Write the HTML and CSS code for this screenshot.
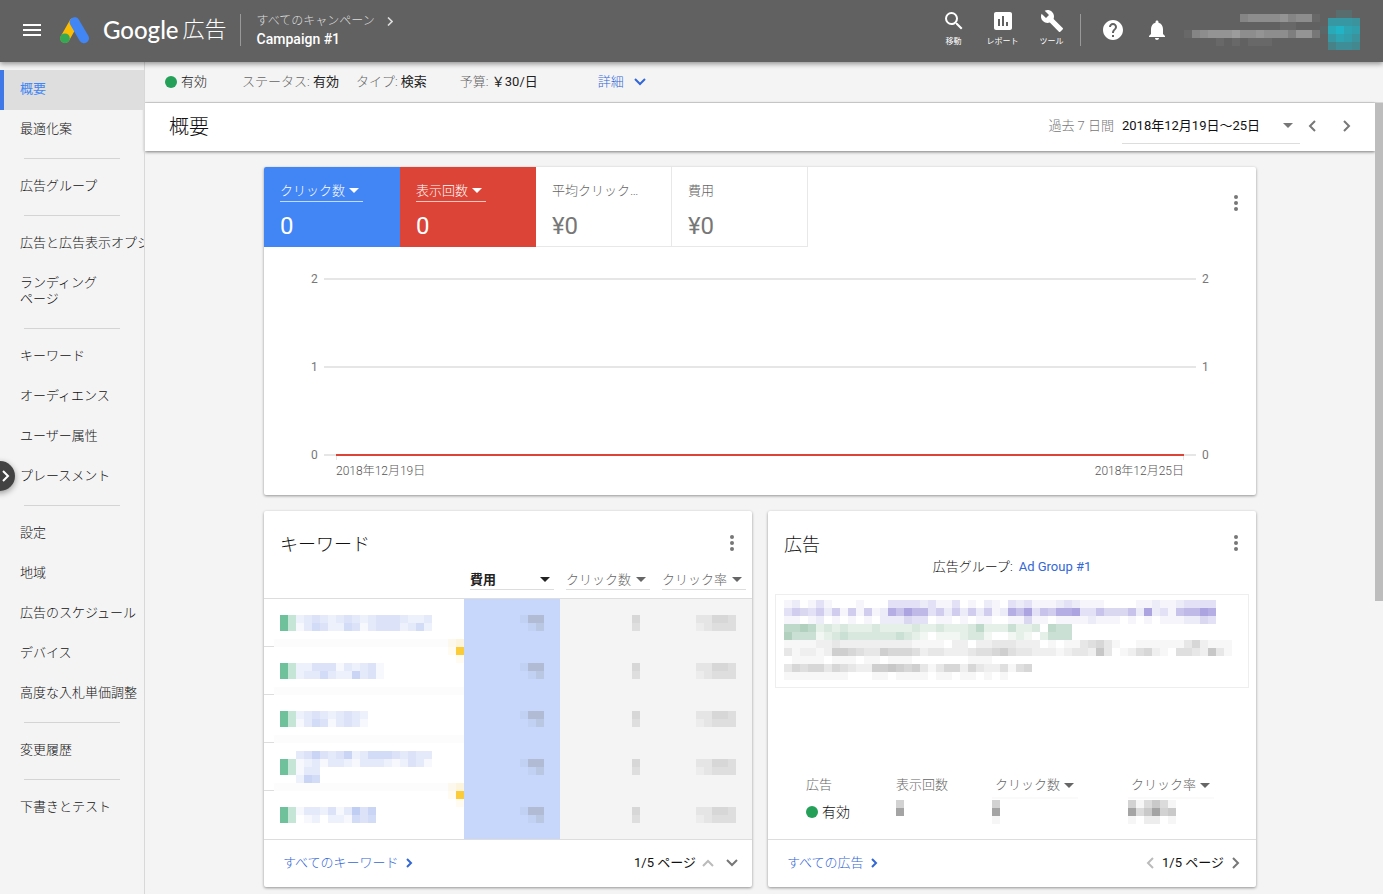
FILE: index.html
```html
<!DOCTYPE html>
<html lang="ja">
<head>
<meta charset="utf-8">
<title>Google 広告</title>
<link rel="stylesheet" href="styles.css">
</head>
<body>
<header class="topbar">
  <button class="icon-btn menu-btn" aria-label="メニュー"><svg width="18" height="12" viewBox="0 0 18 12"><path d="M0 0h18v2H0zM0 5h18v2H0zM0 10h18v2H0z" fill="currentColor"/></svg></button>
  <div class="brand">
    <svg width="30" height="27" viewBox="0 0 30 27" fill="none" stroke-linecap="round"><path d="M5 21.200 13.800 5.700" stroke="#fbbc04" stroke-width="9.400"/><path d="M14.600 5.200 24 21.200" stroke="#4285f4" stroke-width="10"/><circle cx="4.900" cy="21.300" r="4.900" fill="#34a853"/></svg>
    <span class="brand-google">Google</span><span class="brand-ads">広告</span>
  </div>
  <div class="crumbs">
    <a class="crumb-parent" href="#">すべてのキャンペーン<svg width="6" height="9" viewBox="0 0 6 9"><path d="M1 .5l4 4-4 4" fill="none" stroke="currentColor" stroke-width="1.600"/></svg></a>
    <strong>Campaign #1</strong>
  </div>
  <div class="tools">
    <button class="tool"><svg width="24" height="24" viewBox="0 0 24 24"><path fill="currentColor" d="M15.500 14h-.79l-.28-.27A6.470 6.470 0 0 0 16 9.500 6.500 6.500 0 1 0 9.500 16c1.610 0 3.090-.59 4.230-1.570l.27.28v.79l5 4.990L20.490 19l-4.990-5zm-6 0C7.010 14 5 11.990 5 9.500S7.010 5 9.500 5 14 7.010 14 9.500 11.990 14 9.500 14z"/></svg>移動</button>
    <button class="tool"><svg width="24" height="24" viewBox="0 0 24 24"><path fill="currentColor" d="M19 3H5c-1.100 0-2 .9-2 2v14c0 1.100.9 2 2 2h14c1.100 0 2-.9 2-2V5c0-1.100-.9-2-2-2zM9 17H7v-7h2v7zm4 0h-2V7h2v10zm4 0h-2v-4h2v4z"/></svg>レポート</button>
    <button class="tool"><svg width="24" height="24" viewBox="0 0 24 24"><path fill="currentColor" d="M22.700 19l-9.100-9.100c.9-2.300.4-5-1.500-6.900-2-2-5-2.400-7.400-1.300L9 6 6 9 1.600 4.700C.4 7.100.9 10.100 2.900 12.100c1.900 1.900 4.600 2.400 6.900 1.500l9.100 9.100c.4.4 1 .4 1.400 0l2.300-2.300c.5-.4.5-1.100.1-1.400z"/></svg>ツール</button>
  </div>
  <div class="account">
    <button class="icon-btn" aria-label="ヘルプ"><svg width="24" height="24" viewBox="0 0 24 24"><path fill="currentColor" d="M12 2C6.480 2 2 6.480 2 12s4.480 10 10 10 10-4.480 10-10S17.520 2 12 2zm1 17h-2v-2h2v2zm2.070-7.750l-.9.920C13.450 12.900 13 13.500 13 15h-2v-.5c0-1.100.45-2.100 1.170-2.830l1.240-1.260c.37-.36.59-.86.59-1.410 0-1.100-.9-2-2-2s-2 .9-2 2H8c0-2.210 1.790-4 4-4s4 1.790 4 4c0 .88-.36 1.680-.93 2.250z"/></svg></button>
    <button class="icon-btn" aria-label="通知"><svg width="24" height="24" viewBox="0 0 24 24"><path fill="currentColor" d="M12 22c1.100 0 2-.9 2-2h-4c0 1.100.89 2 2 2zm6-6v-5c0-3.070-1.640-5.640-4.500-6.320V4c0-.83-.67-1.500-1.500-1.500s-1.500.67-1.500 1.500v.68C7.630 5.360 6 7.920 6 11v5l-2 2v1h16v-1l-2-2z"/></svg></button>
    <div class="user">
      <svg class="mosaic" data-color="#d0d0d0" data-rows="00000005666675661 00000000000011000 15677786676664773 00001010111000000"></svg>
      <svg class="mosaic" data-color="#22b4c6" data-rows="00220 0aaa9 1dfcb 0acb9 06887"></svg>
    </div>
  </div>
</header>
<div class="shell">
  <nav class="sidebar">
    <ul>
      <li><a class="active" href="#">概要</a></li>
      <li><a href="#">最適化案</a></li>
      <li class="rule"></li>
      <li><a href="#">広告グループ</a></li>
      <li class="rule"></li>
      <li><a href="#">広告と広告表示オプション</a></li>
      <li><a href="#">ランディング<br>ページ</a></li>
      <li class="rule"></li>
      <li><a href="#">キーワード</a></li>
      <li><a href="#">オーディエンス</a></li>
      <li><a href="#">ユーザー属性</a></li>
      <li><a href="#">プレースメント</a></li>
      <li class="rule"></li>
      <li><a href="#">設定</a></li>
      <li><a href="#">地域</a></li>
      <li><a href="#">広告のスケジュール</a></li>
      <li><a href="#">デバイス</a></li>
      <li><a href="#">高度な入札単価調整</a></li>
      <li class="rule"></li>
      <li><a href="#">変更履歴</a></li>
      <li class="rule"></li>
      <li><a href="#">下書きとテスト</a></li>
    </ul>
    <button class="expander" aria-label="ナビゲーションを開く"><svg width="8" height="12" viewBox="0 0 8 12"><path d="M1 1l5 5-5 5" fill="none" stroke="currentColor" stroke-width="2"/></svg></button>
  </nav>
  <main class="main">
    <div class="statusbar">
      <span class="state"><i class="dot"></i>有効</span>
      <span class="fact">ステータス: <b>有効</b></span>
      <span class="fact">タイプ: <b>検索</b></span>
      <span class="fact budget">予算: <b>￥30/日</b></span>
      <button class="details">詳細<svg width="12" height="8" viewBox="0 0 12 8"><path d="M1 1l5 5 5-5" fill="none" stroke="currentColor" stroke-width="2"/></svg></button>
    </div>
    <div class="body-row">
      <div class="content">
        <div class="titlebar">
          <h1>概要</h1>
          <div class="period">
            <span class="period-name">過去 7 日間</span>
            <button class="period-range">2018年12月19日～25日<i class="caret"></i></button>
            <button class="step" aria-label="前の期間"><svg width="8" height="12" viewBox="0 0 8 12"><path d="M7 1L2 6l5 5" fill="none" stroke="currentColor" stroke-width="2"/></svg></button>
            <button class="step" aria-label="次の期間"><svg width="8" height="12" viewBox="0 0 8 12"><path d="M1 1l5 5-5 5" fill="none" stroke="currentColor" stroke-width="2"/></svg></button>
          </div>
        </div>
        <div class="cards">
          <section class="card overview">
            <button class="more" aria-label="その他"><svg width="24" height="24" viewBox="0 0 24 24" fill="currentColor"><circle cx="12" cy="6" r="2"/><circle cx="12" cy="12" r="2"/><circle cx="12" cy="18" r="2"/></svg></button>
            <div class="metrics">
              <div class="metric blue"><button>クリック数<i class="caret"></i></button><p>0</p></div>
              <div class="metric red"><button>表示回数<i class="caret"></i></button><p>0</p></div>
              <div class="metric"><span>平均クリック…</span><p>¥0</p></div>
              <div class="metric"><span>費用</span><p>¥0</p></div>
            </div>
            <div class="chart">
              <div class="tick"><span>2</span><i class="grid-line"></i><span>2</span></div>
              <div class="tick"><span>1</span><i class="grid-line"></i><span>1</span></div>
              <div class="tick"><span>0</span><i class="grid-line"><i class="series"></i></i><span>0</span></div>
              <div class="dates"><span>2018年12月19日</span><span>2018年12月25日</span></div>
            </div>
          </section>
          <section class="card keywords">
            <button class="more" aria-label="その他"><svg width="24" height="24" viewBox="0 0 24 24" fill="currentColor"><circle cx="12" cy="6" r="2"/><circle cx="12" cy="12" r="2"/><circle cx="12" cy="18" r="2"/></svg></button>
            <h2>キーワード</h2>
            <table>
              <thead>
                <tr><th class="name"></th><th><button class="sorted">費用<i class="caret"></i></button></th><th><button>クリック数<i class="caret"></i></button></th><th><button>クリック率<i class="caret"></i></button></th></tr>
              </thead>
              <tbody>
                <tr><td class="name"><div><svg class="mosaic" data-color="#26a269" data-rows="a4 a4"></svg><svg class="mosaic" data-color="#7a96e8" data-rows="23432343234443223 13542254134442352"></svg></div></td>
                <td class="cost"><svg class="mosaic" data-color="#888888" data-rows="155 013"></svg></td><td><svg class="mosaic clicks" data-color="#888888" data-rows="4 3"></svg></td><td><svg class="mosaic" data-color="#888888" data-rows="22443 12333"></svg></td></tr>
                <tr><td class="name"><div><svg class="mosaic" data-color="#26a269" data-rows="a4 a4"></svg><svg class="mosaic" data-color="#7a96e8" data-rows="22444132341 23353226341"></svg></div><svg class="mosaic flag" data-color="#fcc419" data-rows="12 1d 01"></svg></td>
                <td class="cost"><svg class="mosaic" data-color="#888888" data-rows="155 013"></svg></td><td><svg class="mosaic clicks" data-color="#888888" data-rows="4 3"></svg></td><td><svg class="mosaic" data-color="#888888" data-rows="22443 12333"></svg></td></tr>
                <tr><td class="name"><div><svg class="mosaic" data-color="#26a269" data-rows="a4 a4"></svg><svg class="mosaic" data-color="#7a96e8" data-rows="234323432 135413431"></svg></div></td>
                <td class="cost"><svg class="mosaic" data-color="#888888" data-rows="155 013"></svg></td><td><svg class="mosaic clicks" data-color="#888888" data-rows="4 3"></svg></td><td><svg class="mosaic" data-color="#888888" data-rows="22443 12333"></svg></td></tr>
                <tr><td class="name"><div><svg class="mosaic" data-color="#26a269" data-rows="a4 a4"></svg><svg class="mosaic" data-color="#7a96e8" data-rows="34643462355543433 12313321333212431 13300000000000000 26500000000000000"></svg></div></td>
                <td class="cost"><svg class="mosaic" data-color="#888888" data-rows="155 013"></svg></td><td><svg class="mosaic clicks" data-color="#888888" data-rows="4 3"></svg></td><td><svg class="mosaic" data-color="#888888" data-rows="22443 12333"></svg></td></tr>
                <tr><td class="name"><div><svg class="mosaic" data-color="#26a269" data-rows="a4 a4"></svg><svg class="mosaic" data-color="#7a96e8" data-rows="1332413746 0120221545"></svg></div><svg class="mosaic flag" data-color="#fcc419" data-rows="12 1d 01"></svg></td>
                <td class="cost"><svg class="mosaic" data-color="#888888" data-rows="155 013"></svg></td><td><svg class="mosaic clicks" data-color="#888888" data-rows="4 3"></svg></td><td><svg class="mosaic" data-color="#888888" data-rows="22443 12333"></svg></td></tr>
              </tbody>
            </table>
            <footer>
              <a href="#">すべてのキーワード<svg width="7" height="10" viewBox="0 0 7 10"><path d="M1 1l4 4-4 4" fill="none" stroke="currentColor" stroke-width="2"/></svg></a>
              <div class="pager"><span>1/5 ページ</span>
                <button class="off" aria-label="前のページ"><svg width="12" height="8" viewBox="0 0 12 8"><path d="M1 7l5-5 5 5" fill="none" stroke="currentColor" stroke-width="2"/></svg></button>
                <button aria-label="次のページ"><svg width="12" height="8" viewBox="0 0 12 8"><path d="M1 1l5 5 5-5" fill="none" stroke="currentColor" stroke-width="2"/></svg></button></div>
            </footer>
          </section>
          <section class="card ads">
            <button class="more" aria-label="その他"><svg width="24" height="24" viewBox="0 0 24 24" fill="currentColor"><circle cx="12" cy="6" r="2"/><circle cx="12" cy="12" r="2"/><circle cx="12" cy="18" r="2"/></svg></button>
            <h2>広告</h2>
            <p class="group">広告グループ:<a href="#">Ad Group #1</a></p>
            <div class="preview">
              <svg class="mosaic" data-color="#7468cc" data-rows="120131000100033332311301021032311123211100001121123333 354352515151286977352525251286936588933644462923167798 110120101010222433011010110011411011112111010101112243"></svg>
              <svg class="mosaic" data-color="#3c8c5c" data-rows="556523232223222232232223522242230544 644412343333334321011123310012102444"></svg>
              <svg class="mosaic" data-color="#888888" data-rows="11112232222222221111022022333222010113453100111111352111 31221266543365554233222344564332221233273012452104432731 01111011101101110000000111000000000000000000000000000000 35455354322667656313552532241450000000000000000000000000 11111111000110111101101101010000000000000000000000000000"></svg>
            </div>
            <table class="adstats">
              <thead><tr><th>広告</th><th>表示回数</th><th><button>クリック数<i class="caret"></i></button></th><th><button>クリック率<i class="caret"></i></button></th></tr></thead>
              <tbody><tr><td><span class="state"><i class="dot"></i>有効</span></td><td><svg class="mosaic" data-color="#777777" data-rows="5 a 0"></svg></td><td><svg class="mosaic" data-color="#777777" data-rows="5 a 1"></svg></td><td><svg class="mosaic" data-color="#777777" data-rows="514641 a46a56 102201"></svg></td></tr></tbody>
            </table>
            <footer>
              <a href="#">すべての広告<svg width="7" height="10" viewBox="0 0 7 10"><path d="M1 1l4 4-4 4" fill="none" stroke="currentColor" stroke-width="2"/></svg></a>
              <div class="pager"><button class="off" aria-label="前のページ"><svg width="8" height="12" viewBox="0 0 8 12"><path d="M7 1L2 6l5 5" fill="none" stroke="currentColor" stroke-width="2"/></svg></button>
                <span>1/5 ページ</span>
                <button aria-label="次のページ"><svg width="8" height="12" viewBox="0 0 8 12"><path d="M1 1l5 5-5 5" fill="none" stroke="currentColor" stroke-width="2"/></svg></button></div>
            </footer>
          </section>
        </div>
      </div>
      <div class="scroll"><div class="thumb"></div></div>
    </div>
  </main>
</div>
<script src="mosaic.js"></script>
</body>
</html>
```

FILE: styles.css
```css
* { box-sizing: border-box; }
body, h1, h2, p, ul { margin: 0; padding: 0; }
body {
  display: flex;
  flex-direction: column;
  min-height: 100vh;
  background: #f4f4f4;
  color: #111;
  font: 13px/16px Roboto, "Noto Sans CJK JP", sans-serif;
  font-weight: 300;
}
button { border: 0; padding: 0; background: none; color: inherit; font: inherit; cursor: pointer; }
a { color: inherit; text-decoration: none; }
i { font-style: normal; }
svg { display: block; flex: none; }
.caret {
  flex: none;
  width: 10px;
  border: 5px solid transparent;
  border-top-color: currentColor;
  border-bottom: 0;
}

/* Top bar */
.topbar {
  position: relative;
  z-index: 2;
  display: flex;
  align-items: center;
  height: 62px;
  padding: 0 23px 2px;
  background: #616161;
  color: #fff;
  box-shadow: 0 2px 5px rgba(0, 0, 0, .4);
}
.brand { display: flex; align-items: center; margin-left: 19px; }
.brand-google { margin-left: 13px; font: 500 24px/32px Lato, sans-serif; }
.brand-ads { margin-left: 4px; font-size: 22px; line-height: 32px; }
.crumbs {
  display: flex;
  flex-direction: column;
  justify-content: center;
  height: 32px;
  margin-left: 13px;
  padding-left: 16px;
  border-left: 1px solid #999;
  white-space: nowrap;
}
.crumb-parent { display: flex; align-items: center; gap: 12px; color: #ddd; font-size: 12px; line-height: 18px; }
.crumbs strong { font-size: 14px; font-weight: 500; line-height: 18px; }
.tools { display: flex; gap: 8px; margin-left: auto; padding-right: 8px; border-right: 1px solid #999; height: 32px; align-items: center; }
.tool { display: flex; flex-direction: column; align-items: center; width: 41px; font-size: 8px; font-weight: 400; line-height: 18px; white-space: nowrap; }
.account { display: flex; align-items: center; gap: 20px; margin-left: 20px; }
.user { display: flex; align-items: center; margin-left: -5px; }

/* Navigation */
.shell { display: flex; flex: 1; }
.sidebar { position: relative; flex: none; width: 145px; padding-top: 8px; border-right: 1px solid #d8d8d8; }
.sidebar ul { list-style: none; overflow: hidden; }
.sidebar a { display: block; padding: 11px 0 13px 20px; white-space: nowrap; }
.sidebar .active { padding-left: 16px; border-left: 4px solid #4078e8; background: #dedede; color: #4285f4; font-weight: 400; }
.rule { height: 1px; margin: 8px 24px; background: #d4d4d4; }
.expander {
  position: absolute;
  left: -15px;
  top: 399px;
  display: flex;
  justify-content: flex-end;
  align-items: center;
  width: 30px;
  height: 30px;
  padding-right: 5px;
  border-radius: 50%;
  background: #424242;
  color: #fff;
  box-shadow: 0 2px 6px rgba(0, 0, 0, .4);
}

/* Status line */
.main { display: flex; flex: 1; flex-direction: column; min-width: 0; }
.statusbar { display: flex; align-items: center; height: 41px; padding: 0 20px; border-bottom: 1px solid #d8d8d8; color: #666; }
.state { display: flex; align-items: center; gap: 4px; color: #111; }
.dot { width: 12px; height: 12px; border-radius: 50%; background: #24a058; }
.fact { margin-left: 17px; }
.state + .fact { margin-left: 35px; }
.fact b { color: #222; font-weight: 400; }
.fact.budget { margin-left: 33px; }
.details { display: flex; align-items: center; gap: 10px; margin-left: 60px; color: #3367d6; }

/* Page heading */
.body-row { display: flex; flex: 1; }
.content { flex: 1; min-width: 0; }
.scroll { width: 8px; }
.thumb { height: 63%; background: #bdbdbd; }
.titlebar { display: flex; align-items: center; justify-content: space-between; height: 48px; padding: 0 24px 2px; background: #fff; box-shadow: 0 1px 3px rgba(0, 0, 0, .5); }
.titlebar h1 { padding-top: 2px; color: #111; font-size: 20px; font-weight: 300; }
.period { display: flex; align-items: center; }
.period-name { margin-right: 8px; color: #777; }
.period-range { display: flex; align-items: center; justify-content: space-between; width: 178px; height: 36px; padding-right: 7px; border-bottom: 1px solid #ddd; color: #111; font-weight: 400; }
.period-range .caret { color: #777; }
.step { margin-left: 8px; color: #777; }
.step + .step { margin-left: 27px; }

/* Cards */
.cards { display: grid; grid-template-columns: 1fr 1fr; gap: 16px; max-width: 1008px; margin: 0 auto; padding: 16px 8px 7px; }
.card { position: relative; display: flex; flex-direction: column; border-radius: 2px; background: #fff; box-shadow: 0 1px 3px rgba(0, 0, 0, .4); }
.overview { grid-column: 1 / -1; }
.more { position: absolute; top: 20px; right: 8px; color: #777; }
.overview .more { top: 24px; }
.card h2 { padding: 24px 16px 0; font-size: 18px; font-weight: 300; line-height: 20px; }

/* Metric tiles */
.metrics { display: flex; }
.metric { width: 136px; height: 80px; padding: 15px 16px 0; border: solid #e8e8e8; border-width: 0 1px 1px 0; color: #666; }
.metric button { display: flex; align-items: center; gap: 4px; height: 20px; padding: 0 4px 2px 0; border-bottom: 1px solid rgba(255, 255, 255, .7); }
.metric span { display: block; height: 20px; line-height: 18px; white-space: nowrap; }
.metric p { margin-top: 8px; color: #777; font-size: 24px; font-weight: 400; line-height: 32px; }
.metric.blue, .metric.red { border: 0; color: #fff; }
.metric.blue { border-radius: 2px 0 0 0; background: #4285f4; }
.metric.red { background: #db4437; }
.metric.blue p, .metric.red p { color: #fff; }

/* Chart */
.chart { padding: 24px 0 16px; color: #777; font-size: 12px; font-weight: 400; }
.tick { display: flex; align-items: center; gap: 6px; height: 16px; margin: 0 47px 72px; }
.tick span { width: 7px; }
.grid-line { flex: 1; height: 2px; background: #e6e6e6; }
.series {
  display: block;
  height: 6px;
  margin: 0 12px;
  background:
    linear-gradient(#db4437, #db4437) 0 0 / 100% 2px no-repeat,
    linear-gradient(#e6e6e6, #e6e6e6) 0 0 / 1px 100% no-repeat,
    linear-gradient(#e6e6e6, #e6e6e6) 100% 0 / 1px 100% no-repeat;
}
.tick:nth-child(3) { margin-bottom: 0; }
.dates { display: flex; justify-content: space-between; padding: 0 72px; color: #555; font-weight: 300; }

/* Keyword table */
table { width: 100%; border-spacing: 0; table-layout: fixed; }
th, td { padding: 0; font-weight: 300; text-align: left; }
.keywords thead th { height: 44px; padding: 0 6px 8px; border-bottom: 1px solid #ddd; vertical-align: bottom; }
.keywords .name { width: 41%; }
.keywords th button { display: flex; align-items: center; justify-content: space-between; width: 100%; height: 22px; padding: 2px 4px 0 0; border-bottom: 1px solid #ddd; color: #666; white-space: nowrap; }
.keywords th .sorted { color: #222; font-weight: 700; }
.keywords td { position: relative; height: 48px; padding-right: 16px; background: #f4f4f4; }
.keywords td .mosaic { margin-left: auto; }
.keywords td.cost { background: #c6d7fb; }
.keywords td.name { padding: 0 0 0 16px; background: linear-gradient(#fcfcfc, #fcfcfc) 10px 100% / 100% 8px no-repeat, linear-gradient(#ddd, #ddd) 0 100% / 10px 1px no-repeat, #fff; }
.keywords tr:last-child td.name { background: #fff; }
.keywords .name div { display: flex; align-items: center; }
.keywords .name div .mosaic { margin: 0; }
.keywords .flag { position: absolute; right: 0; top: -8px; }

/* Ad preview */
.group { padding-top: 4px; text-align: center; }
.group a { margin-left: 6px; color: #3367d6; font-weight: 400; }
.preview { margin: 19px 7px 0; padding: 5px 8px 7px; border: 1px solid #eee; overflow: hidden; }
.adstats { width: auto; margin: auto 40px 15px 38px; color: #666; }
.adstats th { height: 23px; vertical-align: top; }
.adstats th:nth-child(1) { width: 90px; }
.adstats th:nth-child(2) { width: 96px; }
.adstats th:nth-child(3) { width: 136px; }
.adstats button { display: flex; align-items: center; gap: 4px; height: 22px; padding: 0 4px 4px 3px; border-bottom: 2px solid #fafafa; white-space: nowrap; }
.adstats td { height: 24px; font-size: 14px; }
.card footer { display: flex; align-items: center; justify-content: space-between; height: 48px; padding: 0 14px 1px 19px; border-top: 1px solid #ddd; }
.card footer a { display: flex; align-items: center; gap: 7px; color: #3367d6; }
.pager { display: flex; align-items: center; gap: 6px; color: #111; font-weight: 400; }
.pager button { color: #777; }
.pager button + button { margin-left: 6px; }
.pager .off { color: #bbb; }
.card.ads footer { padding-right: 16px; }
.ads .pager { gap: 8px; }
```

FILE: mosaic.js
```js
// Draws obscured text as 8px cells; each hex digit is the cell's opacity.
document.querySelectorAll('.mosaic').forEach(function (svg) {
  var rows = svg.dataset.rows.split(' ');
  var size = 8;
  svg.setAttribute('width', rows[0].length * size);
  svg.setAttribute('height', rows.length * size);
  rows.forEach(function (row, y) {
    row.split('').forEach(function (level, x) {
      if (level === '0') return;
      var cell = document.createElementNS('http://www.w3.org/2000/svg', 'rect');
      cell.setAttribute('x', x * size);
      cell.setAttribute('y', y * size);
      cell.setAttribute('width', size);
      cell.setAttribute('height', size);
      cell.setAttribute('fill', svg.dataset.color);
      cell.setAttribute('fill-opacity', parseInt(level, 16) / 15);
      svg.appendChild(cell);
    });
  });
});
```
